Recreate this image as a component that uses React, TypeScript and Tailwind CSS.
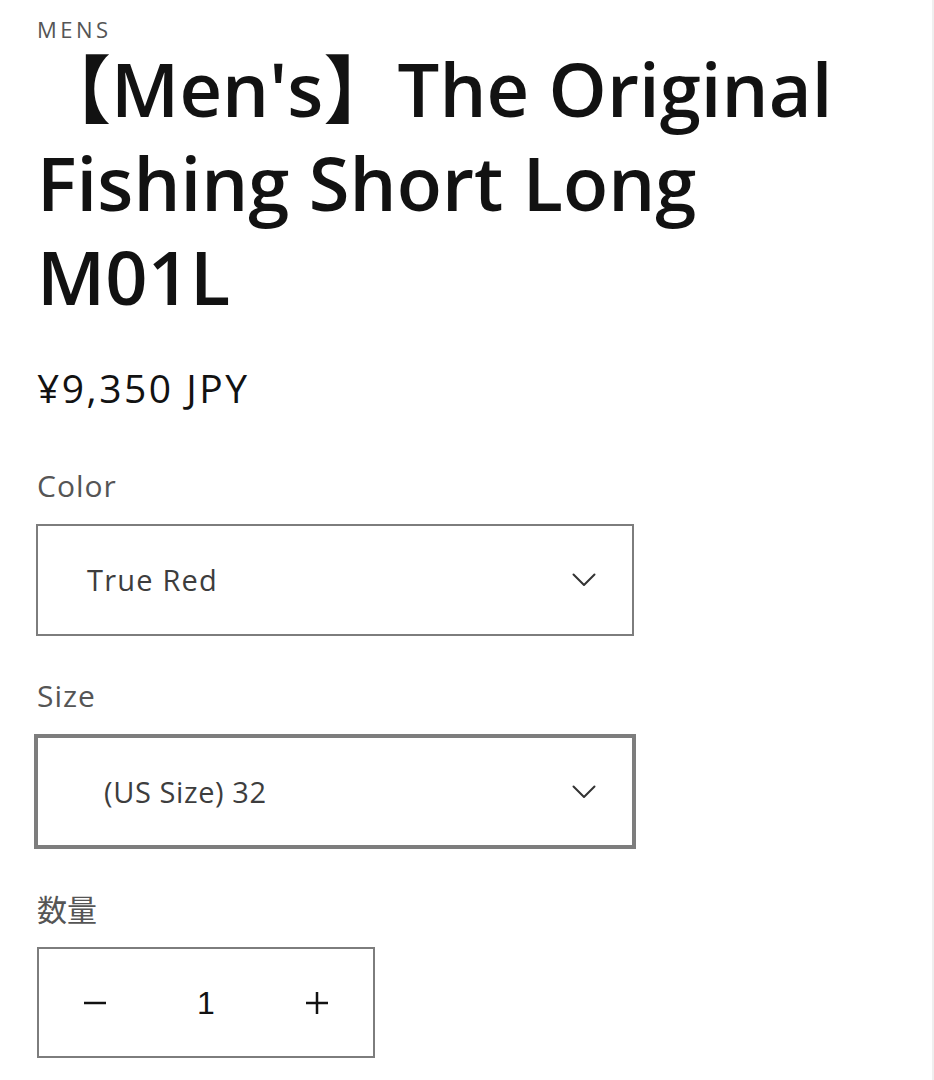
import { useState } from "react";

function Caret() {
  return (
    <svg width="24" height="14" viewBox="0 0 24 14" fill="none" className="shrink-0">
      <path d="M1.5 1.5 L12 12 L22.5 1.5" stroke="#333" strokeWidth="2" strokeLinecap="round" strokeLinejoin="round" />
    </svg>
  );
}

export default function App() {
  const [qty, setQty] = useState(1);

  return (
    <div className="min-h-screen bg-white flex font-['Open_Sans','Noto_Sans_CJK_JP',sans-serif]">
      <div className="flex-1 pl-[37px] pt-[16px]">
        <p className="text-[22px] leading-[26px] tracking-[3.5px] text-[#555]">MENS</p>
        <h1 className="w-[860px] text-[74px] leading-[94px] font-semibold tracking-[0.1px] text-[#121212]">
          【Men's】The Original Fishing Short Long M01L
        </h1>

        <p className="mt-[39px] text-[39px] leading-[50px] tracking-[2.5px] text-[#121212]">¥9,350 JPY</p>

        <label className="block mt-[53px] text-[30px] leading-[40px] tracking-[1px] text-[#555]">Color</label>
        <div className="mt-[18px] -ml-[1px] w-[598px] h-[112px] border-2 border-[#7d7d7d] flex items-center justify-between pl-[49px] pr-[36px]">
          <span className="text-[29px] tracking-[1.2px] text-[#3d3d3d]">True Red</span>
          <Caret />
        </div>

        <label className="block mt-[40px] text-[30px] leading-[40px] tracking-[1px] text-[#555]">Size</label>
        <div className="mt-[18px] -ml-[3px] w-[602px] h-[115px] border-4 border-[#7d7d7d] flex items-center justify-between pl-[66px] pr-[36px]">
          <span className="text-[29px] tracking-[0.6px] text-[#3d3d3d]">(US Size) 32</span>
          <Caret />
        </div>

        <label className="block mt-[41px] text-[30px] leading-[40px] text-[#555]">数量</label>
        <div className="mt-[17px] w-[338px] h-[111px] border-2 border-[#7d7d7d] grid grid-cols-3 items-center">
          <button className="flex justify-center" onClick={() => setQty(Math.max(1, qty - 1))}>
            <svg width="24" height="4" viewBox="0 0 24 4">
              <path d="M1 2 H23" stroke="#121212" strokeWidth="2.5" />
            </svg>
          </button>
          <span className="text-center text-[32px] font-light text-[#121212] font-['Liberation_Sans',sans-serif]">{qty}</span>
          <button className="flex justify-center" onClick={() => setQty(qty + 1)}>
            <svg width="24" height="24" viewBox="0 0 24 24">
              <path d="M1 12 H23 M12 1 V23" stroke="#121212" strokeWidth="2.5" />
            </svg>
          </button>
        </div>
      </div>
      <div className="w-[2px] bg-[#efefef]" />
    </div>
  );
}
